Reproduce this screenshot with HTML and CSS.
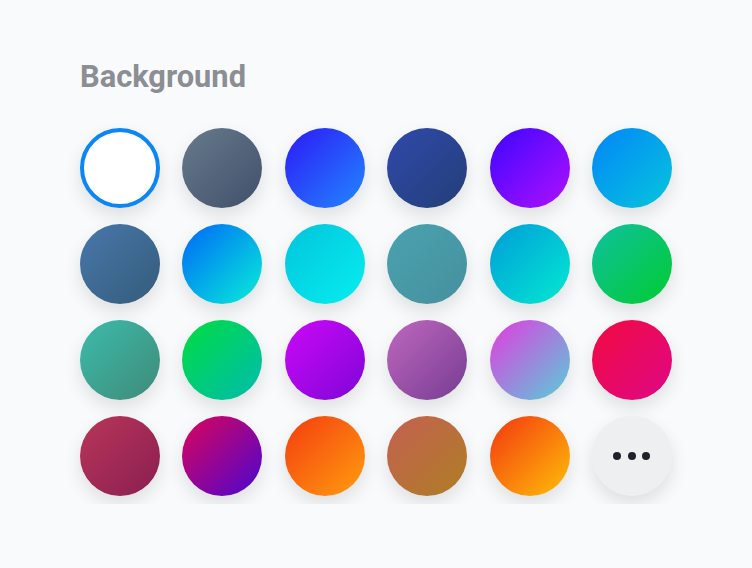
FILE: index.html
```html
<!DOCTYPE html>
<html>
<head>
<meta charset="utf-8">
<link rel="stylesheet" href="styles.css">
</head>
<body>
<div class="panel">
  <h1 class="title">Background</h1>
  <div class="grid">
    <div class="sw sw-white selected"></div>
    <div class="sw g2"></div>
    <div class="sw g3"></div>
    <div class="sw g4"></div>
    <div class="sw g5"></div>
    <div class="sw g6"></div>
    <div class="sw g7"></div>
    <div class="sw g8"></div>
    <div class="sw g9"></div>
    <div class="sw g10"></div>
    <div class="sw g11"></div>
    <div class="sw g12"></div>
    <div class="sw g13"></div>
    <div class="sw g14"></div>
    <div class="sw g15"></div>
    <div class="sw g16"></div>
    <div class="sw g17"></div>
    <div class="sw g18"></div>
    <div class="sw g19"></div>
    <div class="sw g20"></div>
    <div class="sw g21"></div>
    <div class="sw g22"></div>
    <div class="sw g23"></div>
    <div class="sw more"><span class="dot"></span><span class="dot"></span><span class="dot"></span></div>
  </div>
</div>
</body>
</html>
```
FILE: styles.css
```css
html, body {
  margin: 0;
  padding: 0;
  background: #f9fafc;
}
body {
  font-family: Roboto, "Liberation Sans", sans-serif;
}
.panel {
  overflow: hidden;
  padding: 62px 80px 8px 80px;
}
.title {
  margin: 0 0 36px 0;
  font-size: 30.8px;
  line-height: 30px;
  font-weight: 700;
  color: #8b8e92;
  letter-spacing: 0;
}
.grid {
  width: 592px;
  display: grid;
  grid-template-columns: repeat(6, 80px);
  justify-content: space-between;
  row-gap: 16px;
}
.sw {
  width: 80px;
  height: 80px;
  border-radius: 50%;
  box-sizing: border-box;
  box-shadow: 0 8px 18px rgba(0, 0, 0, 0.11);
}
.sw-white {
  background: #ffffff;
}
.selected {
  border: 4px solid #0b86f4;
}
.g2 { background: linear-gradient(135deg, #677b8b, #414f6b); }
.g3 { background: linear-gradient(135deg, #2d18f6, #2188ff); }
.g4 { background: linear-gradient(135deg, #3049ac, #233f76); }
.g5 { background: linear-gradient(135deg, #3c06ff, #b010ff); }
.g6 { background: linear-gradient(135deg, #0285f8, #06c6dc); }
.g7 { background: linear-gradient(135deg, #4877ab, #345c79); }
.g8 { background: linear-gradient(135deg, #0066f8, #07f0d8); }
.g9 { background: linear-gradient(135deg, #02c4dc, #07eef0); }
.g10 { background: linear-gradient(135deg, #4ba2af, #45909e); }
.g11 { background: linear-gradient(135deg, #009cd8, #03ead2); }
.g12 { background: linear-gradient(135deg, #10c0a0, #00cc30); }
.g13 { background: linear-gradient(135deg, #3cbcab, #3f8a78); }
.g14 { background: linear-gradient(135deg, #00dc40, #00bcb0); }
.g15 { background: linear-gradient(135deg, #cc08f8, #7e06d6); }
.g16 { background: linear-gradient(135deg, #be68be, #763c92); }
.g17 { background: linear-gradient(135deg, #e43ae0, #55d0d8); }
.g18 { background: linear-gradient(135deg, #f20a40, #de0886); }
.g19 { background: linear-gradient(135deg, #b83658, #8a1e52); }
.g20 { background: linear-gradient(135deg, #dc0558, #4a06d2); }
.g21 { background: linear-gradient(135deg, #f43c10, #ff9e0e); }
.g22 { background: linear-gradient(135deg, #c46052, #ae7e24); }
.g23 { background: linear-gradient(135deg, #f33610, #ffc008); }
.more {
  background: #eeeff1;
  display: flex;
  align-items: center;
  justify-content: center;
  gap: 6.5px;
}
.dot {
  width: 8px;
  height: 8px;
  border-radius: 50%;
  background: #1f2329;
}
```
